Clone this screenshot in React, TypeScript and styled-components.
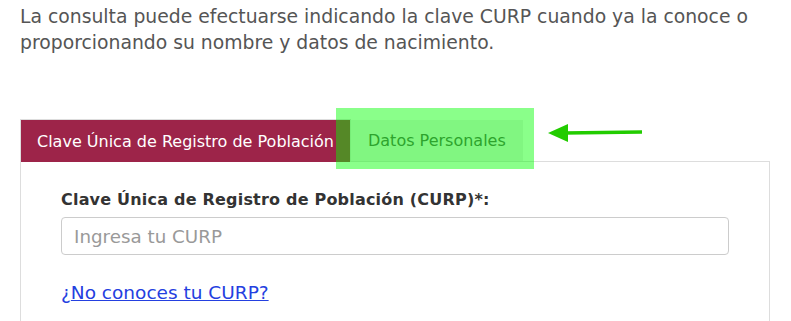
import styled, { createGlobalStyle } from 'styled-components';

const GlobalStyle = createGlobalStyle`
    body {
        margin: 0;
        background: #fff;
        font-family: "DejaVu Sans", "Open Sans", sans-serif;
    }
`

export default function App() {
    return (
        <Page>
            <GlobalStyle />
            <Intro>
                La consulta puede efectuarse indicando la clave CURP cuando ya la conoce o
                <br />
                proporcionando su nombre y datos de nacimiento.
            </Intro>
            <Tabs>
                <Tab active>Clave Única de Registro de Población</Tab>
                <Tab>
                    Datos Personales
                    <Highlight />
                    <Arrow width="96" height="20" viewBox="0 0 96 20">
                        <line x1="16" y1="10" x2="94" y2="9" stroke="#22cc00" strokeWidth="3.5" />
                        <polygon points="0,10 20,1 20,19" fill="#22cc00" />
                    </Arrow>
                </Tab>
            </Tabs>
            <Panel>
                <Label>Clave Única de Registro de Población (CURP)*:</Label>
                <Input placeholder="Ingresa tu CURP" />
                <Help>
                    ¿<Link href="#">No conoces tu CURP?</Link>
                </Help>
            </Panel>
        </Page>
    );
}

const Page = styled.div`
    padding: 4px 0 0 20px;
    width: 750px;
`

const Intro = styled.p`
    margin: 0 0 63px;
    font-size: 18.8px;
    line-height: 26px;
    color: #555;
    white-space: nowrap;
`

const Tabs = styled.div`
    display: flex;
    border-bottom: 1px solid #ddd;
`

const Tab = styled.div<{ active?: boolean }>`
    position: relative;
    display: flex;
    align-items: center;
    height: 42px;
    padding: 0 16px;
    font-size: 16px;
    color: ${p => (p.active ? '#fff' : '#555')};
    background: ${p => (p.active ? '#9d2449' : '#eee')};
    border: 1px solid ${p => (p.active ? '#ddd' : 'transparent')};
    border-bottom: none;
    margin-bottom: ${p => (p.active ? '-1px' : '0')};
    ${p => (p.active ? '' : 'height: 41px; margin-top: 1px; border-top: none;')}
`

const Highlight = styled.div`
    position: absolute;
    left: -16px;
    right: -12px;
    top: -12px;
    bottom: -8px;
    background: rgba(0, 255, 0, 0.46);
`

const Arrow = styled.svg`
    position: absolute;
    left: calc(100% + 26px);
    top: 3px;
`

const Panel = styled.div`
    border: 1px solid #ddd;
    border-top: none;
    padding: 28px 40px 20px;
`

const Label = styled.div`
    font-size: 16px;
    font-weight: 600;
    line-height: 20px;
    letter-spacing: 0.2px;
    color: #333;
    margin-bottom: 7px;
`

const Input = styled.input`
    display: block;
    box-sizing: border-box;
    width: 100%;
    height: 38px;
    padding: 0 12px;
    border: 1px solid #ccc;
    border-radius: 4px;
    font-family: inherit;
    font-size: 18.3px;
    color: #333;
    &::placeholder {
        color: #999;
    }
`

const Help = styled.div`
    margin-top: 28px;
    font-size: 18.5px;
    line-height: 20px;
    color: #2440e0;
`

const Link = styled.a`
    color: #2440e0;
    text-decoration: underline;
`
